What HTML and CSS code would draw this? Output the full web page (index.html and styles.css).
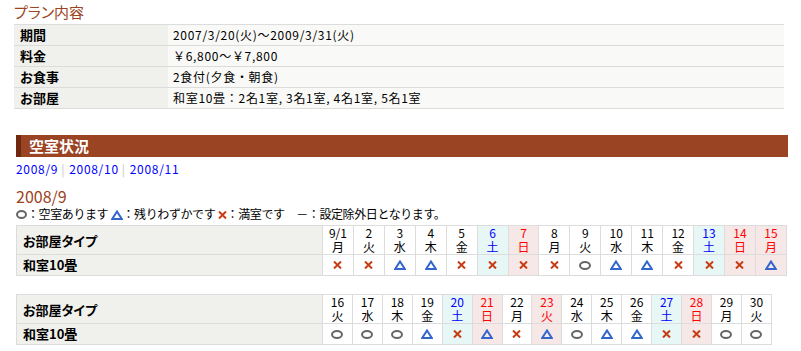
FILE: index.html
```html
<!DOCTYPE html>
<html lang="ja">
<head>
<meta charset="utf-8">
<title>プラン内容</title>
<link rel="stylesheet" href="styles.css">
</head>
<body>
<div class="page">
  <h2 class="title">プラン内容</h2>
  <table class="plan">
    <tr><th>期間</th><td>2007/3/20(火)～2009/3/31(火)</td></tr>
    <tr><th>料金</th><td>￥6,800～￥7,800</td></tr>
    <tr><th>お食事</th><td>2食付(夕食・朝食)</td></tr>
    <tr><th>お部屋</th><td>和室10畳：2名1室, 3名1室, 4名1室, 5名1室</td></tr>
  </table>

  <div class="avail">
    <h3 class="bar">空室状況</h3>
    <div class="months"><a href="#">2008/9</a><span class="sep">|</span><a href="#">2008/10</a><span class="sep">|</span><a href="#">2008/11</a></div>
    <h4 class="month">2008/9</h4>
    <div class="legend">
      <span class="ic"><svg width="11" height="9" viewBox="0 0 11 9"><ellipse cx="5.5" cy="4.5" rx="4.5" ry="3.5" fill="none" stroke="#666" stroke-width="2"/></svg></span>：空室あります
      <span class="ic"><svg width="12" height="10" viewBox="0 0 12 10"><path d="M6 1.5 L10.8 9 L1.2 9 Z" fill="none" stroke="#3366cc" stroke-width="2"/></svg></span>：残りわずかです
      <span class="ic"><svg width="9" height="8" viewBox="0 0 9 8"><path d="M1 0.5 L8 7.5 M8 0.5 L1 7.5" stroke="#c83c14" stroke-width="2"/></svg></span>：満室です　－：設定除外日となります。
    </div>

    <table class="cal cal1">
      <tr class="head">
        <th class="type">お部屋タイプ</th>
        <td>9/1<br>月</td><td>2<br>火</td><td>3<br>水</td><td>4<br>木</td><td>5<br>金</td>
        <td class="sat">6<br>土</td><td class="sun">7<br>日</td><td>8<br>月</td><td>9<br>火</td><td>10<br>水</td>
        <td>11<br>木</td><td>12<br>金</td><td class="sat">13<br>土</td><td class="sun">14<br>日</td><td class="sun">15<br>月</td>
      </tr>
      <tr class="data">
        <th class="type">和室10畳</th>
        <td><svg class="x"><use href="#ix"/></svg></td>
        <td><svg class="x"><use href="#ix"/></svg></td>
        <td><svg class="t"><use href="#it"/></svg></td>
        <td><svg class="t"><use href="#it"/></svg></td>
        <td><svg class="x"><use href="#ix"/></svg></td>
        <td class="sat"><svg class="x"><use href="#ix"/></svg></td>
        <td class="sun"><svg class="x"><use href="#ix"/></svg></td>
        <td><svg class="x"><use href="#ix"/></svg></td>
        <td><svg class="o"><use href="#io"/></svg></td>
        <td><svg class="t"><use href="#it"/></svg></td>
        <td><svg class="t"><use href="#it"/></svg></td>
        <td><svg class="x"><use href="#ix"/></svg></td>
        <td class="sat"><svg class="x"><use href="#ix"/></svg></td>
        <td class="sun"><svg class="x"><use href="#ix"/></svg></td>
        <td class="sun"><svg class="t"><use href="#it"/></svg></td>
      </tr>
    </table>

    <table class="cal cal2">
      <tr class="head">
        <th class="type">お部屋タイプ</th>
        <td>16<br>火</td><td>17<br>水</td><td>18<br>木</td><td>19<br>金</td><td class="sat">20<br>土</td>
        <td class="sun">21<br>日</td><td>22<br>月</td><td class="sun">23<br>火</td><td>24<br>水</td><td>25<br>木</td>
        <td>26<br>金</td><td class="sat">27<br>土</td><td class="sun">28<br>日</td><td>29<br>月</td><td>30<br>火</td>
      </tr>
      <tr class="data">
        <th class="type">和室10畳</th>
        <td><svg class="o"><use href="#io"/></svg></td>
        <td><svg class="o"><use href="#io"/></svg></td>
        <td><svg class="o"><use href="#io"/></svg></td>
        <td><svg class="t"><use href="#it"/></svg></td>
        <td class="sat"><svg class="x"><use href="#ix"/></svg></td>
        <td class="sun"><svg class="t"><use href="#it"/></svg></td>
        <td><svg class="x"><use href="#ix"/></svg></td>
        <td class="sun"><svg class="t"><use href="#it"/></svg></td>
        <td><svg class="o"><use href="#io"/></svg></td>
        <td><svg class="t"><use href="#it"/></svg></td>
        <td><svg class="t"><use href="#it"/></svg></td>
        <td class="sat"><svg class="x"><use href="#ix"/></svg></td>
        <td class="sun"><svg class="x"><use href="#ix"/></svg></td>
        <td><svg class="o"><use href="#io"/></svg></td>
        <td><svg class="o"><use href="#io"/></svg></td>
      </tr>
    </table>
  </div>
</div>

<svg class="defs" width="0" height="0">
  <defs>
    <g id="ix"><path d="M1 0.5 L8 7.5 M8 0.5 L1 7.5" stroke="#c83c14" stroke-width="2" fill="none"/></g>
    <g id="it"><path d="M6 1.5 L10.8 9 L1.2 9 Z" fill="none" stroke="#3366cc" stroke-width="2"/></g>
    <g id="io"><ellipse cx="6" cy="4.5" rx="5" ry="3.5" fill="none" stroke="#666" stroke-width="2"/></g>
  </defs>
</svg>
</body>
</html>
```

FILE: styles.css
```css
html, body {
  margin: 0;
  padding: 0;
  background: #fff;
}
body {
  font-family: "Noto Sans CJK JP", "Liberation Sans", sans-serif;
  font-size: 12px;
  color: #000;
}
.defs {
  position: absolute;
  width: 0;
  height: 0;
  overflow: hidden;
}
.page {
  padding: 0 14px;
}
.title {
  margin: 0;
  padding-top: 2px;
  height: 22px;
  font-size: 15px;
  line-height: 20px;
  font-weight: normal;
  color: #9c4322;
  font-feature-settings: "palt";
}
.plan {
  width: 770px;
  border-collapse: collapse;
}
.plan th, .plan td {
  height: 20px;
  padding: 0;
  border-top: 1px solid #dcdcdc;
  border-bottom: 1px solid #dcdcdc;
  line-height: 20px;
  text-align: left;
  vertical-align: middle;
}
.plan th {
  width: 154px;
  padding-left: 6px;
  box-sizing: border-box;
  background: #f0f0ec;
  font-weight: bold;
  font-size: 13px;
}
.plan td {
  padding-left: 5px;
  background: #f9f9f7;
  letter-spacing: 0.7px;
}
.avail {
  padding-left: 2px;
}
.bar {
  margin: 26px 0 0 0;
  width: 772px;
  height: 22px;
  box-sizing: border-box;
  background: #9a4424;
  border-left: 5px solid #6e2810;
  color: #fff;
  font-size: 15px;
  line-height: 22px;
  padding-left: 8px;
  font-weight: bold;
}
.months {
  margin-top: 3px;
  height: 18px;
  line-height: 18px;
  letter-spacing: 0.7px;
}
.months a {
  color: #0000ff;
  text-decoration: none;
}
.sep {
  color: #c8c8c8;
  margin: 0 4px 0 3px;
}
.month {
  margin: 9px 0 0 0;
  height: 19px;
  line-height: 19px;
  font-size: 16px;
  font-weight: normal;
  color: #9c4322;
}
.legend {
  margin-top: 0;
  height: 16px;
  line-height: 16px;
  letter-spacing: -0.4px;
}
.ic {
  display: inline-block;
  vertical-align: middle;
  line-height: 0;
  margin-top: -2px;
}
.cal {
  border-collapse: collapse;
  table-layout: fixed;
  margin-top: 3px;
}
.cal1 {
  width: 771px;
}
.cal2 {
  width: 756px;
  margin-top: 18px;
}
.cal th, .cal td {
  border: 1px solid #dcdcdc;
  padding: 0;
}
.cal .type {
  width: 306px;
  box-sizing: border-box;
  background: #f0f0ec;
  text-align: left;
  padding-left: 6px;
  font-weight: bold;
  font-size: 13px;
  font-feature-settings: "palt";
}
.cal .head td {
  height: 27px;
  text-align: center;
  line-height: 14px;
  vertical-align: middle;
}
.cal .data td, .cal .data th {
  height: 20px;
  text-align: center;
  vertical-align: middle;
  line-height: 0;
}
.cal .data th {
  text-align: left;
  line-height: 20px;
}
.cal td.sat {
  background: #e6f7f6;
  color: #0000ff;
}
.cal td.sun {
  background: #f7e8e8;
  color: #ff0000;
}
.cal svg.x {
  width: 9px;
  height: 8px;
}
.cal svg.t {
  width: 12px;
  height: 10px;
}
.cal svg.o {
  width: 12px;
  height: 9px;
}
```
